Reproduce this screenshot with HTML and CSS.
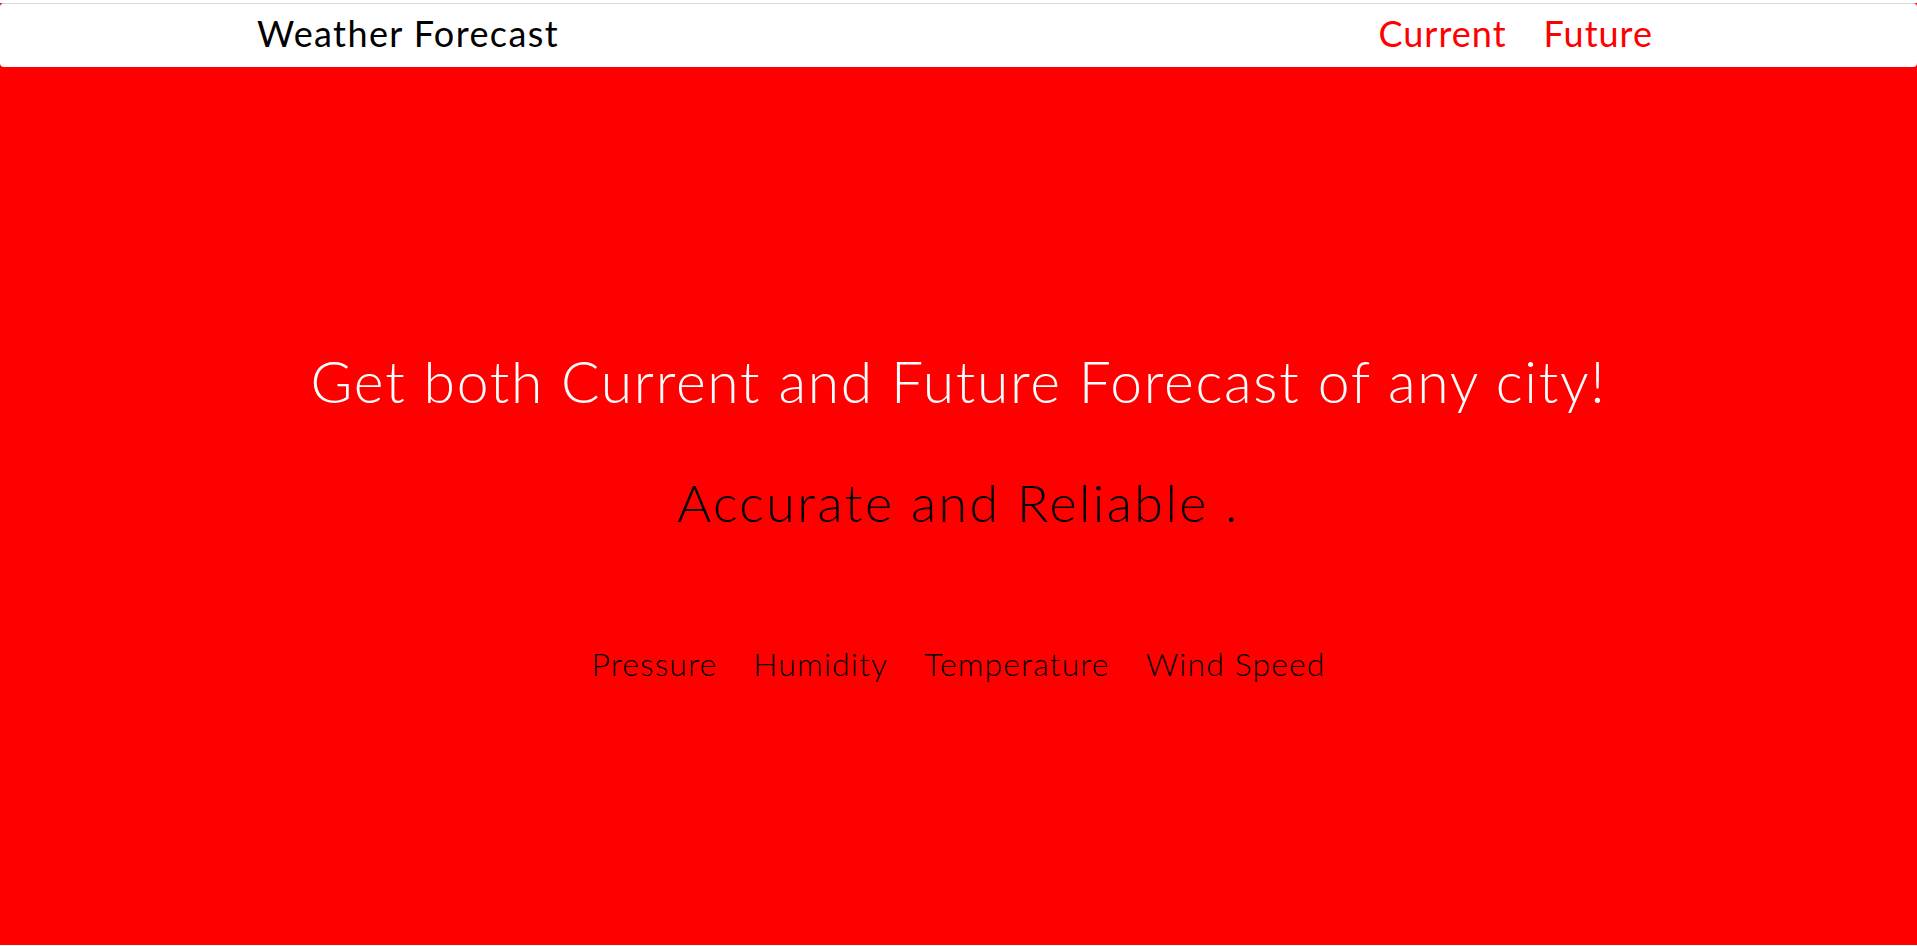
FILE: index.html
```html
<!DOCTYPE html>
<html lang="en">
<head>
<meta charset="utf-8">
<title>Weather Forecast</title>
<link rel="stylesheet" href="styles.css">
</head>
<body>
<div class="page">
  <nav class="navbar">
    <a class="brand" href="#">Weather Forecast</a>
    <div class="nav-links">
      <a class="nav-link" href="#">Current</a>
      <a class="nav-link" href="#">Future</a>
    </div>
  </nav>
  <main class="hero">
    <h1 class="hero-title">Get both Current and Future Forecast of any city!</h1>
    <h2 class="hero-sub">Accurate and Reliable .</h2>
    <ul class="features">
      <li>Pressure</li>
      <li>Humidity</li>
      <li>Temperature</li>
      <li>Wind Speed</li>
    </ul>
  </main>
</div>
</body>
</html>
```

FILE: styles.css
```css
html, body {
  margin: 0;
  padding: 0;
  background: #fff;
}
body {
  font-family: Lato, "Open Sans", sans-serif;
  height: 946px;
  overflow: hidden;
}
.page {
  margin-top: 3px;
  height: 942px;
  background: #ff0000;
  display: flex;
  flex-direction: column;
}
.navbar {
  box-sizing: border-box;
  height: 64px;
  background: #fff;
  border-top: 1px solid #d9d9d9;
  border-radius: 4px;
  display: flex;
  align-items: center;
  justify-content: space-between;
  padding: 0 264px 5px 257px;
}
.brand {
  color: #000;
  text-decoration: none;
  font-size: 36px;
  font-weight: 400;
  letter-spacing: 1.4px;
}
.nav-links {
  display: flex;
  gap: 37px;
}
.nav-link {
  color: #f00;
  text-decoration: none;
  font-size: 36px;
  letter-spacing: 1px;
}
.hero {
  flex: 1;
  display: flex;
  flex-direction: column;
  align-items: center;
  text-align: center;
}
.hero-title {
  margin: 280px 0 0;
  font-size: 57px;
  font-weight: 300;
  color: #fff;
  line-height: 1.2;
  letter-spacing: 1.7px;
}
.hero-sub {
  margin: 56px 0 0;
  font-size: 52px;
  font-weight: 300;
  color: #000;
  line-height: 1.2;
  letter-spacing: 2.4px;
}
.features {
  list-style: none;
  margin: 110px 0 0;
  padding: 0;
  display: flex;
  gap: 36px;
  font-size: 32px;
  font-weight: 300;
  color: #000;
  letter-spacing: 1.1px;
}
```
